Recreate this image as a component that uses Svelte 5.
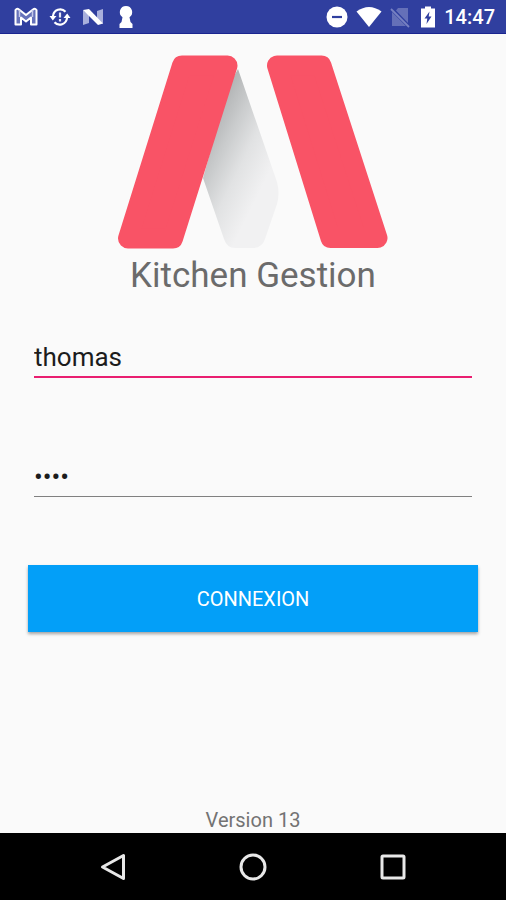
<script lang="ts">
  let username = $state('thomas');
  let password = $state('1234');

  function connect(event: SubmitEvent) {
    event.preventDefault();
  }
</script>

<div class="screen">
  <header class="status-bar">
    <div class="notifications">
      <!-- mail -->
      <svg width="24" height="20" viewBox="0 0 24 20" aria-hidden="true">
        <path d="M1.500 17.500V3Q3 1 5 2.500L12 8L19 2.500Q21 1 22.500 3V17.500H17V10.500L12 14.500L7 10.500V17.500Z" fill="#6672ba" stroke="#fff" stroke-width="2" stroke-linejoin="round" />
        <path d="M5.500 3V10M18.500 3V10" fill="none" stroke="#c5caea" stroke-width="1.500" />
      </svg>
      <!-- sync problem -->
      <svg width="22" height="20" viewBox="0 0 22 20" aria-hidden="true">
        <path d="M4 9A7.200 7.200 0 0 1 16.500 4.800M18 11A7.200 7.200 0 0 1 5.500 15.200" fill="none" stroke="#fff" stroke-width="2.200" />
        <path d="M0.500 9H7.500L3.800 13.500ZM14.500 11H21.500L18.200 6.500Z" fill="#fff" />
        <path d="M11 5.500V10.500M11 12V14.500" stroke="#e4e6f5" stroke-width="2.200" />
      </svg>
      <!-- android N -->
      <svg width="22" height="20" viewBox="0 0 22 20" aria-hidden="true">
        <path d="M1 3L7 8V16L1 18ZM15 4L21 2V17L15 12Z" fill="#a9b0dc" />
        <path d="M1 3L7 2L21 16.500L16 18Z" fill="#fff" />
      </svg>
      <!-- keyhole -->
      <svg width="20" height="24" viewBox="0 0 20 24" aria-hidden="true">
        <path d="M11 1A6.200 6.200 0 0 1 14.500 12.300L15.500 17L17.500 19V23H4.500V19L6.500 17L7.500 12.300A6.200 6.200 0 0 1 11 1Z" fill="#fff" />
      </svg>
    </div>
    <div class="system">
      <!-- do not disturb -->
      <svg width="22" height="22" viewBox="0 0 22 22" aria-hidden="true">
        <circle cx="11" cy="11" r="10.500" fill="#fff" />
        <path d="M6 11H16" stroke="#303f9f" stroke-width="2.200" />
      </svg>
      <!-- wifi -->
      <svg width="26" height="22" viewBox="0 0 26 22" aria-hidden="true">
        <path d="M13 21L0.500 5.500Q13 -3.500 25.500 5.500Z" fill="#fff" />
      </svg>
      <!-- no sim -->
      <svg width="22" height="22" viewBox="0 0 22 22" aria-hidden="true">
        <path d="M8 2H18V17L6 4.500ZM2 6L16 20H2Z" fill="#6570b8" />
        <path d="M1 3L19 21" stroke="#7882c2" stroke-width="1.800" />
      </svg>
      <!-- battery charging -->
      <svg width="16" height="22" viewBox="0 0 16 22" aria-hidden="true">
        <path d="M5 0.500H11V2.500H15V21.500H1V2.500H5Z" fill="#fff" />
        <path d="M9.500 5.500L4.500 12.500H7.300L6.500 18L11.500 10.500H8.700Z" fill="#303f9f" />
      </svg>
      <time>14:47</time>
    </div>
  </header>

  <main>
    <svg class="logo" viewBox="0 0 272 194" aria-hidden="true">
      <defs>
        <linearGradient id="fold" gradientUnits="userSpaceOnUse" x1="85" y1="90" x2="150" y2="122">
          <stop offset="0" stop-color="#b4b6b7" />
          <stop offset="0.3" stop-color="#cbcdce" />
          <stop offset="0.6" stop-color="#e1e2e3" />
          <stop offset="1" stop-color="#f1f1f2" />
        </linearGradient>
      </defs>
      <path d="M121 14L160 127Q163 138 160 149L148 184Q145 193 136 193H118Q110 193 107 184L86 123L112 30Z" fill="url(#fold)" />
      <g fill="#f95366" stroke="#f95366" stroke-width="20" stroke-linejoin="round">
        <path d="M65 10.500H110.500L56 183.500H11Z" />
        <path d="M160 10.500H204.500L260.500 183H213.500Z" />
      </g>
    </svg>
    <h1>Kitchen Gestion</h1>

    <form onsubmit={connect}>
      <input class="field active" type="text" aria-label="Identifiant" bind:value={username} />
      <input class="field" type="password" aria-label="Mot de passe" bind:value={password} />
      <button class="submit" type="submit">CONNEXION</button>
    </form>

    <p class="version">Version 13</p>
  </main>

  <nav>
    <button type="button" aria-label="Retour">
      <svg width="28" height="28" viewBox="0 0 28 28" aria-hidden="true">
        <path d="M24.500 2.500V25.500L3.500 14Z" />
      </svg>
    </button>
    <button type="button" aria-label="Accueil">
      <svg width="28" height="28" viewBox="0 0 28 28" aria-hidden="true">
        <circle cx="14" cy="14" r="12" />
      </svg>
    </button>
    <button type="button" aria-label="Applications">
      <svg width="28" height="28" viewBox="0 0 28 28" aria-hidden="true">
        <rect x="3" y="3" width="22" height="22" rx="1" />
      </svg>
    </button>
  </nav>
</div>

<style>
  :global(body) {
    margin: 0;
    background: #fafafa;
  }
  .screen {
    display: flex;
    flex-direction: column;
    min-height: 100vh;
    font-family: Roboto, 'Liberation Sans', sans-serif;
    background: #fafafa;
  }
  .status-bar {
    display: flex;
    align-items: center;
    justify-content: space-between;
    box-sizing: border-box;
    height: 34px;
    padding: 0 11px 0 14px;
    background: #303f9f;
    border-bottom: 1px solid #1a2590;
    color: #fff;
  }
  .notifications,
  .system {
    display: flex;
    align-items: center;
  }
  .notifications {
    gap: 11px;
  }
  .system {
    gap: 8px;
  }
  time {
    font-size: 20px;
    font-weight: 500;
    line-height: 24px;
  }
  main {
    flex: 1;
    display: flex;
    flex-direction: column;
    align-items: center;
    padding: 21px 28px 0;
  }
  .logo {
    width: 272px;
    max-width: 100%;
  }
  h1 {
    margin: 5px 0 0;
    font-size: 35px;
    font-weight: 400;
    line-height: 44px;
    color: #6b6b6b;
  }
  form {
    display: flex;
    flex-direction: column;
    align-self: stretch;
    gap: 68px;
    margin-top: 40px;
  }
  .field {
    box-sizing: border-box;
    height: 40px;
    margin: 0 6px;
    padding: 0;
    border: 0;
    border-bottom: 1px solid #808080;
    border-radius: 0;
    outline: none;
    background: transparent;
    color: #1c1c1c;
    font-family: inherit;
    font-size: 26px;
  }
  .field.active {
    margin-bottom: 11px;
    border-bottom: 2px solid #e91e70;
  }
  .submit {
    height: 67px;
    border: 0;
    background: #039ff8;
    box-shadow: 0 2px 3px rgba(0, 0, 0, 0.35);
    color: #fff;
    font-family: inherit;
    font-size: 20px;
    cursor: pointer;
  }
  .version {
    margin: auto 0 0;
    font-size: 20px;
    line-height: 26px;
    color: #737373;
  }
  nav {
    display: flex;
    align-items: center;
    justify-content: center;
    gap: 112px;
    height: 67px;
    background: #000;
  }
  nav button {
    display: flex;
    padding: 0;
    border: 0;
    background: none;
    cursor: pointer;
  }
  nav svg {
    fill: none;
    stroke: #e8e8e8;
    stroke-width: 3;
    stroke-linejoin: round;
  }
</style>
